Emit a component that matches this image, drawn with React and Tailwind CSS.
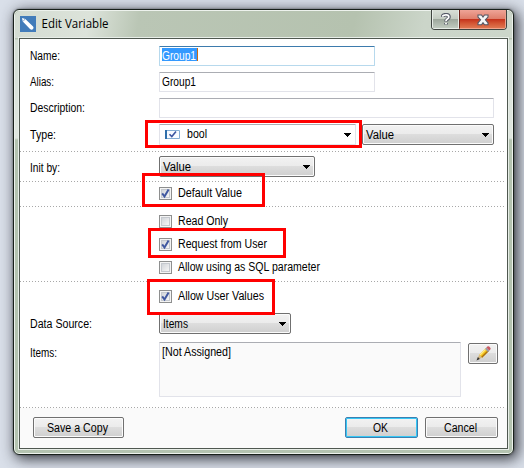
import React from "react";

function Arrow() {
  return (
    <svg width="7" height="4" viewBox="0 0 7 4" shapeRendering="crispEdges" className="shrink-0">
      <path d="M0 0h7v1H0zM1 1h5v1H1zM2 2h3v1H2zM3 3h1v1H3z" fill="#000" />
    </svg>
  );
}

// Single-line text with a fixed advance width.
function T({ w, children, className = "", color = "#000" }) {
  return (
    <svg width={w + 2} height="15" className={`block shrink-0 overflow-visible ${className}`}>
      <text x="0" y="12" textLength={w} lengthAdjust="spacingAndGlyphs" fill={color} className="font-['Liberation_Sans',Arial,sans-serif] text-[12px]">
        {children}
      </text>
    </svg>
  );
}

function Row({ label, w, className, children, labelClass = "" }) {
  return (
    <div className={`flex shrink-0 pl-[10px] ${className}`}>
      <div className={`w-[129px] shrink-0 ${labelClass}`}>{label && <T w={w}>{label}</T>}</div>
      {children}
    </div>
  );
}

function Field({ className, children }) {
  return (
    <div className={`h-[20px] rounded-[1px] border border-[#e2e3ea] border-t-[#abadb3] bg-white pl-[2px] pt-[2px] ${className}`}>
      {children}
    </div>
  );
}

const face =
  "rounded-[2px] border border-[#707070] bg-[linear-gradient(#f2f2f2_0%,#ebebeb_49%,#dddddd_50%,#cfcfcf_100%)] shadow-[inset_0_0_0_1px_#fbfbfb]";

function Select({ className, text, w }) {
  return (
    <div className={`flex h-[21px] shrink-0 justify-between pl-[3px] pr-[4px] pt-[2px] ${face} ${className}`}>
      <T w={w}>{text}</T>
      <div className="pt-[6px]"><Arrow /></div>
    </div>
  );
}

function Button({ className, children }) {
  return <button className={`flex h-[21px] shrink-0 justify-center pt-[2px] ${className}`}>{children}</button>;
}

function Check({ on, text, w }) {
  return (
    <div className="flex h-[13px] items-start">
      <div className="h-[13px] w-[13px] shrink-0 border border-[#8e8f8f] bg-[#f4f4f4] p-px">
        <div className="h-[9px] w-[9px] border border-[#c5c9cf] bg-[linear-gradient(135deg,#d2d5da,#f6f6f6)]">
          {on && (
            <svg width="9" height="9" viewBox="0 0 9 9" className="-ml-px -mt-px overflow-visible">
              <path d="M1.2 4.4 3.5 7.5 7.6.6" fill="none" stroke="#4058a0" strokeWidth="2" />
            </svg>
          )}
        </div>
      </div>
      <T w={w} className="-mt-[2px] ml-[6px]">{text}</T>
    </div>
  );
}

function Dots() {
  return (
    <div className="mr-[2px] h-px grow bg-[repeating-linear-gradient(90deg,#a8a8a8_0_1px,transparent_1px_3px)]" />
  );
}

function CaptionButtons() {
  return (
    <div className="flex h-[20px] w-[76px] overflow-hidden rounded-b-[4px] border border-t-0 border-[#3f4440]">
      <div className="flex w-[27px] justify-center border border-t-0 border-[#e8ede8] bg-[linear-gradient(#d9dfd7_0%,#c3cbc1_48%,#9ca69b_50%,#c0cabf_100%)] pt-[3px]">
        <svg width="10" height="13" viewBox="0 0 10 13">
          <path d="M1.7 4.1V2.8Q2.3 1.7 5 1.7q3 0 3 2.2Q8 5 6.5 6T5 8.5M5 10v1.5" fill="none" stroke="#555967" strokeWidth="3.6" />
          <path d="M1.7 3.8V3Q2.3 1.9 5 1.9q2.8 0 2.8 2Q7.8 5 6.3 6T5 8.1M5 9.8v1.4" fill="none" stroke="#fff" strokeWidth="1.8" />
        </svg>
      </div>
      <div className="flex grow justify-center border border-t-0 border-b-[#f1a58d] border-l-[#6b2018] border-r-[#e9a08d] bg-[linear-gradient(#efa497_0%,#df7f6c_48%,#c4301a_50%,#d45735_75%,#df7650_100%)] pt-[4px]">
        <svg width="12" height="12" viewBox="0 0 12 12">
          <path d="M1 1h3.5L6 3l1.5-2H11v2L8.4 5.8 11 8.8v2H7.5L6 8.7l-1.5 2.1H1v-2l2.6-3L1 3z" fill="#f5f5f5" stroke="#555967" strokeWidth="1.1" />
        </svg>
      </div>
    </div>
  );
}

export default function App() {
  return (
    <div className="relative h-[468px] w-[524px] overflow-hidden bg-[#d9dfe9] pl-[13px] pt-[9px]">
      <div className="flex h-[446px] w-[501px] flex-col rounded-[6px] border border-[#18201a] bg-[linear-gradient(#b8c4b2_0,#b8c4b2_29px,#d5dfd5_30px,#dfe6df_128px,#b4c3b0_130px)] pl-[5px] shadow-[inset_0_0_0_1px_#edf2ed,0_0_2px_rgba(20,22,28,0.6),3px_3px_14px_1px_rgba(30,33,40,0.85)]">
        <div className="-ml-[4px] mr-px mt-px flex h-[27px] shrink-0 justify-between rounded-t-[5px] bg-[linear-gradient(100deg,#d4dcd2_0%,#dce3da_15%,#bac6b5_25%,#b5c2af_68%,#cbd5c9_82%,#ccd6ca_100%)] pl-[5px] pr-[5px]">
          <div className="flex pt-[5px]">
            <svg width="16" height="16" viewBox="0 0 16 16">
              <path d="M0 0h16v16H0z" fill="#427cba" />
              <path d="M2 2 5.3 3l7.8 7.5q1.2 1.8-.3 2.8-1.3 1-2.8-.4L2.8 5.4z" fill="#fff" />
              <path d="m3.2 5 2-1.8" stroke="#427cba" strokeWidth=".7" />
            </svg>
            <svg width="70" height="16" className="ml-[5px] overflow-visible">
              <text x="0.5" y="12" textLength="67" lengthAdjust="spacingAndGlyphs" fill="#000" className="font-['Open_Sans','Noto_Sans',sans-serif] text-[12px]">Edit Variable</text>
            </svg>
          </div>
          <div className="-mt-px"><CaptionButtons /></div>
        </div>

        <div className="flex h-[411px] w-[489px] shrink-0 flex-col border border-[#4f5850] bg-white shadow-[0_0_0_1px_#e8eee8]">
          <Row label="Name:" w={30} className="mt-[7px]" labelClass="pt-[2px]">
            <div className="h-[20px] w-[216px] rounded-[1px] border border-[#b7d9ed] border-t-[#3d7bad] bg-white pl-[2px] pt-[2px]">
              <div className="h-[13px] w-[36px] border-r border-[#cc6a11] bg-[#3399ff]"><T w={34} color="#fff" className="-mt-px">Group1</T></div>
            </div>
          </Row>
          <Row label="Alias:" w={24} className="mt-[6px]" labelClass="pt-[2px]">
            <Field className="w-[216px]"><T w={34} className="-mt-px">Group1</T></Field>
          </Row>
          <Row label="Description:" w={55} className="mt-[6px]" labelClass="pt-[2px]"><Field className="w-[335px]" /></Row>
          <Row label="Type:" w={26} className="mt-[6px]" labelClass="pt-[3px]">
            <div className="flex h-[21px] w-[197px] justify-between rounded-[1px] border border-[#e2e3ea] border-t-[#abadb3] pl-[5px] pr-[4px]">
              <div className="flex">
                <svg width="15" height="9" viewBox="0 0 15 9" className="mt-[5px]">
                  <path d="M.5.5h14v8H.5z" fill="#f8fbff" stroke="#83acd3" />
                  <path d="M0 0h2v9H0z" fill="#2f6eaa" />
                  <path d="m4.5 4.2 2.3 2.3 4.2-5" fill="none" stroke="#3b54a0" strokeWidth="1.6" />
                </svg>
                <T w={20} className="ml-[7px] mt-px">bool</T>
              </div>
              <div className="pt-[8px]"><Arrow /></div>
            </div>
            <Select className="ml-[6px] w-[132px]" text="Value" w={28} />
          </Row>
          <div className="mt-[6px] flex shrink-0"><Dots /></div>
          <Row label="Init by:" w={30} className="mt-[4px]" labelClass="pt-[4px]">
            <Select className="w-[156px]" text="Value" w={28} />
          </Row>
          <div className="mt-[4px] flex shrink-0"><Dots /></div>
          <Row className="mt-[5px]"><Check on text="Default Value" w={64} /></Row>
          <div className="mt-[6px] flex shrink-0"><Dots /></div>
          <Row className="mt-[8px]"><Check text="Read Only" w={50} /></Row>
          <Row className="mt-[10px]"><Check on text="Request from User" w={89} /></Row>
          <Row className="mt-[10px]"><Check text="Allow using as SQL parameter" w={142} /></Row>
          <div className="mt-[7px] flex shrink-0"><Dots /></div>
          <Row className="mt-[8px]"><Check on text="Allow User Values" w={86} /></Row>
          <Row label="Data Source:" w={62} className="mt-[10px]" labelClass="pt-[3px]">
            <Select className="w-[132px]" text="Items" w={25} />
          </Row>
          <Row label="Items:" w={27} className="mt-[8px]" labelClass="pt-[3px]">
            <div className="h-[55px] w-[302px] rounded-[1px] border border-[#e2e3ea] border-t-[#abadb3] bg-[#fafafa] pl-[2px] pt-[1px]">
              <T w={69}>[Not Assigned]</T>
            </div>
            <Button className={`ml-[7px] mt-px w-[30px] ${face}`}>
              <svg width="15" height="15" viewBox="0 0 15 15">
                <path d="m3.2 8.8 6.5-6.5 3 3-6.5 6.4z" fill="#f4c51b" />
                <path d="m5 11 6.8-6.7 1 1-6.6 6.5z" fill="#a96f13" />
                <path d="m3.5 8.5 6-6 .9.9-6 6z" fill="#ffe88a" />
                <path d="m3.2 8.8 3 2.9L.8 14z" fill="#d5b77e" />
                <path d="M.5 14.4 1.9 11l2 2z" fill="#333" />
                <path d="m9 3 1.5-1.5 3 3L12 6z" fill="#9b9ba8" />
                <path d="m10.4 1.5 1-1q1-.6 1.8.1l1.1 1.2q.7.8 0 1.6l-1 1z" fill="#cb5a63" />
              </svg>
            </Button>
          </Row>
          <div className="flex grow flex-col pt-[10px]">
            <div className="flex shrink-0"><Dots /></div>
            <div className="flex grow bg-[#fafafa] pl-[13px] pr-[9px] pt-[9px]">
              <Button className={`w-[91px] ${face}`}><T w={61}>Save a Copy</T></Button>
              <div className="grow" />
              <Button className="w-[73px] rounded-[2px] border border-[#3c7fb1] bg-[linear-gradient(#f2f2f2_0%,#ebebeb_49%,#dddddd_50%,#cfcfcf_100%)] shadow-[inset_0_0_0_1px_#35c7f5]"><T w={15}>OK</T></Button>
              <Button className={`ml-[7px] w-[73px] ${face}`}><T w={33}>Cancel</T></Button>
            </div>
          </div>
        </div>
      </div>

      {/* Highlight frames over the form */}
      <div className="absolute left-[145px] top-[120px] h-[28px] w-[217px] border-3 border-[#ff0000]" />
      <div className="absolute left-[142px] top-[173px] h-[34px] w-[123px] border-3 border-[#ff0000]" />
      <div className="absolute left-[148px] top-[228px] h-[30px] w-[138px] border-3 border-[#ff0000]" />
      <div className="absolute left-[147px] top-[279px] h-[36px] w-[128px] border-3 border-[#ff0000]" />
    </div>
  );
}
